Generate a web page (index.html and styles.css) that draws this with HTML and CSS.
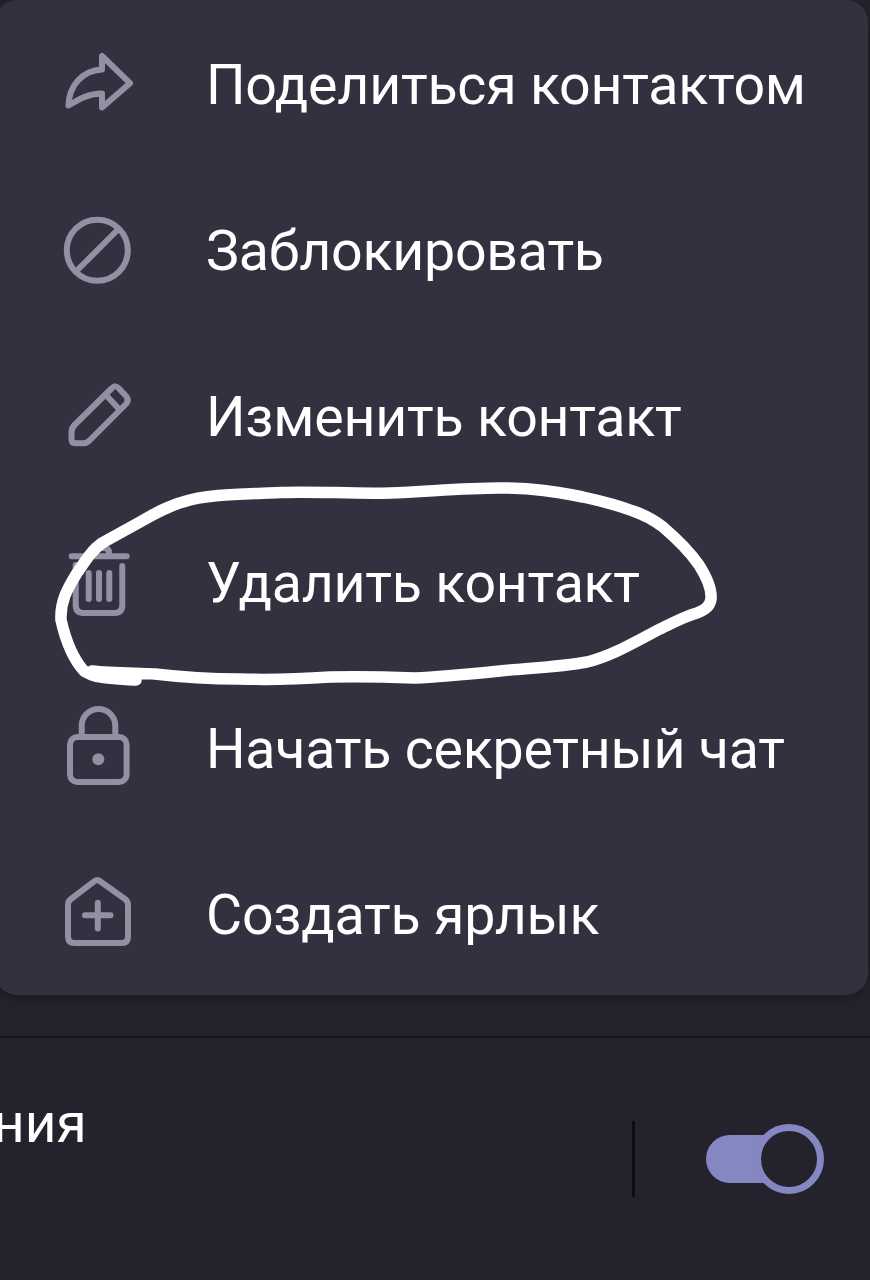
FILE: index.html
```
<!DOCTYPE html>
<html lang="ru">

<head>
    <meta charset="utf-8">
    <meta name="viewport" content="width=device-width, initial-scale=1.0">
    <title>Контакт</title>
    <link rel="stylesheet" href="styles.css">
</head>

<body>

    <nav class="menu">
        <button class="item">
            <svg class="icon" viewBox="0 0 80 90">
                <path d="M44 16V29.500C24 30.500 11 46 10.500 65.500C22 58.500 31 53.500 44 53.500V67.500L72 43.200Z" />
            </svg>
            <span>Поделиться контактом</span>
        </button>
        <button class="item">
            <svg class="icon" viewBox="0 0 80 90">
                <circle cx="39.300" cy="44.300" r="30.500" />
                <path d="M18.500 65L60 23.500" />
            </svg>
            <span>Заблокировать</span>
        </button>
        <button class="item">
            <svg class="icon" viewBox="0 0 80 90">
                <path d="M54 16L17 52.500Q13.500 56 13.500 60V67.500Q13.500 71.300 17.500 71.300H25Q28.500 71.300 31 69L68 32Q71.500 28 68 24L61 16.500Q57.500 12.500 54 16Z" />
                <path d="M48 23L60.500 36.500" />
            </svg>
            <span>Изменить контакт</span>
        </button>
        <button class="item">
            <svg class="icon" viewBox="0 0 80 90">
                <path d="M13.700 18.300H68.700M31.500 17V15Q31.500 10 36.500 10H46Q51 10 51 15V17" />
                <path d="M17.700 27V67Q17.700 75 25.700 75H56.300Q64.300 75 64.300 67V28" />
                <path d="M30.700 35V61M41 35V61M51.300 35V61" />
            </svg>
            <span>Удалить контакт</span>
        </button>
        <button class="item">
            <svg class="icon" viewBox="0 0 80 90">
                <rect x="12" y="33" width="56.600" height="45" rx="7.500" />
                <path d="M23.700 33V22A16.800 17 0 0 1 57.300 22V33" />
                <circle class="dot" cx="40.300" cy="55.300" r="6" />
            </svg>
            <span>Начать секретный чат</span>
        </button>
        <button class="item">
            <svg class="icon" viewBox="0 0 80 90">
                <path d="M36.500 11.200Q39.300 9 42 11.200L67 29Q70 31.200 70 34.500V66.500Q70 73 63.500 73H16.500Q10 73 10 66.500V34.500Q10 31.200 13 29Z" />
                <path d="M27 45.300H52.500M39.800 32.700V58.500" />
            </svg>
            <span>Создать ярлык</span>
        </button>
    </nav>

    <section class="setting">
        <p class="label">ния</p>
        <div class="divider"></div>
        <div class="switch">
            <div class="knob"></div>
        </div>
    </section>

    <!-- hand drawn ring over the menu -->
    <svg class="ring" viewBox="0 0 870 1280">
        <path d="M136 680C122 679 101 679 92 675L84 671C74 660 66 642 61 620C60 602 67 589 77 573C86 560 91 551 102 543L140 522C154 514 168 506 183 502C205 494 245 494 280 492.500C315 491 350 494 390 493C425 492 460 488 500 488C535 488 556 492 583 497C606 502 620 506 633 511C645 515 654 520 663 527C677 539 690 552 699 565C706 576 712 588 711 599C710 607 704 610 697 613C683 617 673 623 660 629C635 642 612 656 587 662C560 667 530 668 500 671C470 674 440 677 415 678C390 677 360 676 330 677C300 679 270 680 240 679C210 679 180 677 155 674C130 673 110 673 92 671" />
    </svg>

</body>

</html>
```
FILE: styles.css
```
* {
    box-sizing: border-box;
}

body {
    position: relative;
    margin: 0;
    height: 1280px;
    background: #24222c;
    color: #ffffff;
    font-family: Roboto, "Noto Sans", sans-serif;
    overflow: hidden;
}

.menu {
    width: 873px;
    height: 995px;
    margin-left: -5px;
    padding-top: 2px;
    border-radius: 22px;
    background: #323140;
    box-shadow: 0 3px 8px #1a1b20;
}

.item {
    display: flex;
    align-items: center;
    gap: 68px;
    width: 100%;
    height: 166px;
    padding: 0 0 0 63px;
    border: 0;
    background: none;
    color: inherit;
    font-family: inherit;
    font-size: 55.5px;
    letter-spacing: -0.23px;
    text-align: left;
    white-space: nowrap;
}

.icon {
    flex: none;
    width: 80px;
    height: 90px;
    fill: none;
    stroke: #9290a3;
    stroke-width: 6;
    stroke-linecap: round;
    stroke-linejoin: round;
}

.icon .dot {
    fill: #9290a3;
    stroke: none;
}

.setting {
    display: flex;
    align-items: flex-start;
    height: 244px;
    margin-top: 41px;
    border-top: 2px solid #15141b;
}

.label {
    width: 640px;
    margin: 53px 0 0 -7px;
    font-size: 55px;
    line-height: 64px;
}

.divider {
    width: 3px;
    height: 76px;
    margin: 83px 0 0 -1px;
    background: #0e0d12;
}

.switch {
    display: flex;
    justify-content: flex-end;
    align-items: center;
    width: 118px;
    height: 48px;
    margin: 97px 0 0 71px;
    border-radius: 24px;
    background: linear-gradient(to right, #8487c1 85px, transparent 85px);
}

.knob {
    flex: none;
    width: 70px;
    height: 70px;
    border: 7px solid #8487c1;
    border-radius: 50%;
    background: #24222c;
}

.ring {
    position: absolute;
    top: 0;
    left: 0;
    width: 870px;
    height: 1280px;
    fill: none;
    stroke: #ffffff;
    stroke-width: 11.5;
    stroke-linecap: round;
    stroke-linejoin: round;
    pointer-events: none;
}
```
